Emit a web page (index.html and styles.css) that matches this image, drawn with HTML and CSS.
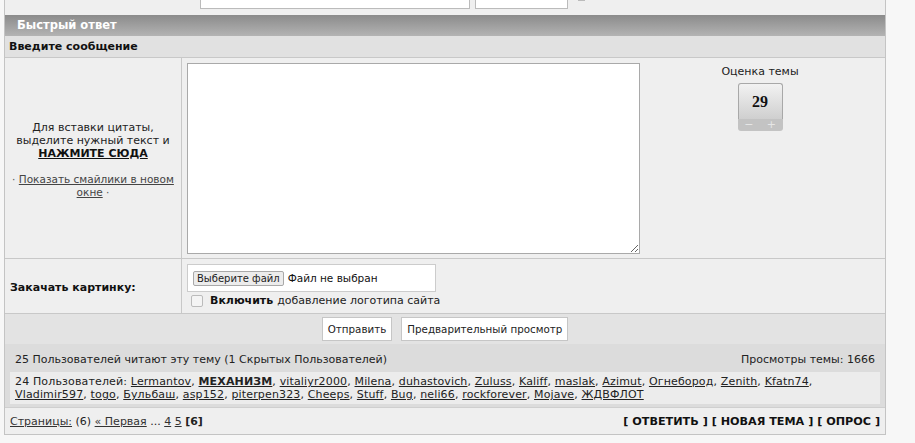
FILE: index.html
```html
<!DOCTYPE html>
<html lang="ru">
<head>
    <meta charset="UTF-8">
    <title>Быстрый ответ</title>
    <link rel="stylesheet" href="styles.css">
</head>
<body>
<div class="board">
    <div class="topbar">
        <span class="search-input"></span>
        <span class="search-where">Искать в теме</span>
        <span class="search-go"></span>
    </div>

    <div class="maintitle">Быстрый ответ</div>
    <div class="subtitle">Введите сообщение</div>

    <div class="form-row post-row">
        <div class="side">
            <p>Для вставки цитаты,<br>выделите нужный текст и<br><a href="#" class="strong">НАЖМИТЕ СЮДА</a></p>
            <p class="smiles">&middot; <a href="#">Показать смайлики в новом окне</a> &middot;</p>
        </div>
        <div class="body post-body">
            <textarea class="message"></textarea>
            <div class="rating">
                <div class="rating-title">Оценка темы</div>
                <div class="rating-box">
                    <div class="rating-num">29</div>
                    <div class="rating-ctrl"><span>&minus;</span><span>+</span></div>
                </div>
            </div>
        </div>
    </div>

    <div class="form-row upload-row">
        <div class="side label">Закачать картинку:</div>
        <div class="body">
            <div class="filebox"><span class="filebtn">Выберите файл</span>Файл не выбран</div>
            <label class="logo-check"><span class="checkbox"></span><b>Включить</b> добавление логотипа сайта</label>
        </div>
    </div>

    <div class="buttons">
        <button>Отправить</button>
        <button>Предварительный просмотр</button>
    </div>

    <div class="stats">
        <div class="stats-head">
            <span>25 Пользователей читают эту тему (1 Скрытых Пользователей)</span>
            <span>Просмотры темы: 1666</span>
        </div>
        <div class="readers">
            24 Пользователей: <a href="#">Lermantov</a>, <a href="#"><b>МЕХАНИЗМ</b></a>, <a href="#">vitaliyr2000</a>, <a href="#">Milena</a>, <a href="#">duhastovich</a>, <a href="#">Zuluss</a>, <a href="#">Kaliff</a>, <a href="#">maslak</a>, <a href="#">Azimut</a>, <a href="#">Огнебород</a>, <a href="#">Zenith</a>, <a href="#">Kfatn74</a>,<br>
            <a href="#">Vladimir597</a>, <a href="#">togo</a>, <a href="#">Бульбаш</a>, <a href="#">asp152</a>, <a href="#">piterpen323</a>, <a href="#">Cheeps</a>, <a href="#">Stuff</a>, <a href="#">Bug</a>, <a href="#">neli66</a>, <a href="#">rockforever</a>, <a href="#">Mojave</a>, <a href="#">ЖДВФЛОТ</a>
        </div>
    </div>

    <div class="pages">
        <span><a href="#">Страницы:</a> (6) <a href="#">&laquo; Первая</a> ... <a href="#">4</a> <a href="#">5</a> <b>[6]</b></span>
        <span class="actions">[ ОТВЕТИТЬ ] [ НОВАЯ ТЕМА ] [ ОПРОС ]</span>
    </div>
</div>
</body>
</html>
```

FILE: styles.css
```css
body {
    margin: 0;
    background: #f7f7f7;
    font-family: "DejaVu Sans", Verdana, sans-serif;
    font-size: 11px;
    color: #222;
}
a {
    color: #222;
}
.board {
    width: 880px;
    margin-left: 4px;
    border: 1px solid #c4c4c4;
    border-top: none;
    background: #efefef;
}

/* search strip, only its lower edge shows */
.topbar {
    height: 15px;
    display: flex;
    align-items: flex-end;
    padding-bottom: 6px;
    box-sizing: border-box;
    overflow: hidden;
    background: #efefef;
}
.search-input {
    display: block;
    width: 268px;
    height: 20px;
    margin-left: 195px;
    background: #fff;
    border: 1px solid #bbb;
    border-top: none;
}
.search-where {
    display: block;
    width: 93px;
    height: 20px;
    margin-left: 5px;
    padding-left: 5px;
    box-sizing: border-box;
    background: #fff;
    border: 1px solid #bbb;
    line-height: 12px;
    color: #333;
}
.search-go {
    display: block;
    width: 7px;
    height: 1px;
    margin: 0 0 8px 10px;
    background: #bbb;
    align-self: flex-start;
}

.maintitle {
    height: 21px;
    line-height: 21px;
    padding-left: 12px;
    background: linear-gradient(#8b8b8b, #b3b3b3);
    color: #fff;
    font-weight: bold;
    font-size: 11.5px;
}
.subtitle {
    height: 21px;
    line-height: 21px;
    padding-left: 4px;
    background: #e1e1e1;
    border-bottom: 1px solid #c8c8c8;
    font-weight: bold;
    color: #111;
}

.form-row {
    display: grid;
    grid-template-columns: 177px 1fr;
    border-bottom: 1px solid #c8c8c8;
}
.side {
    border-right: 1px solid #c8c8c8;
    text-align: center;
    padding: 0 4px;
}
.post-row .side {
    display: flex;
    flex-direction: column;
    justify-content: center;
    padding-top: 4px;
}
.side p {
    margin: 0;
    line-height: 13px;
}
.side .strong {
    font-weight: bold;
    color: #111;
}
.side .smiles {
    margin-top: 13px;
    font-size: 10.5px;
    color: #555;
}
.smiles a {
    color: #444;
}
.post-body {
    display: flex;
    padding: 5px;
    height: 190px;
}
.message {
    width: 453px;
    height: 191px;
    margin: 0;
    box-sizing: border-box;
    border: 1px solid #a9a9a9;
    background: #fff;
    resize: both;
}
.rating {
    flex: 1;
    text-align: center;
    padding-top: 2px;
    padding-right: 0;
}
.rating-title {
    line-height: 13px;
    color: #222;
}
.rating-box {
    width: 45px;
    margin: 5px auto 0;
}
.rating-num {
    height: 35px;
    line-height: 35px;
    border: 1px solid #a8a8a8;
    border-bottom: none;
    border-radius: 3px 3px 0 0;
    background: linear-gradient(#f2f2f2, #cfcfcf);
    font-family: "Liberation Serif", serif;
    font-weight: bold;
    font-size: 16px;
    color: #111;
}
.rating-ctrl {
    height: 12px;
    line-height: 11px;
    display: flex;
    justify-content: space-around;
    background: #c3c3c3;
    border-radius: 0 0 3px 3px;
    color: #e6e6e6;
    font-size: 11px;
}

.upload-row {
    min-height: 54px;
}
.upload-row .label {
    display: flex;
    align-items: center;
    text-align: left;
    padding-left: 5px;
    padding-top: 2px;
    font-weight: bold;
    color: #111;
}
.upload-row .body {
    padding: 5px;
}
.filebox {
    width: 247px;
    height: 26px;
    display: flex;
    align-items: center;
    background: #fff;
    border: 1px solid #ccc;
    font-size: 10.5px;
    color: #111;
}
.filebtn {
    margin: 0 4px 0 5px;
    padding: 1px 3px;
    border: 1px solid #a9a9a9;
    border-radius: 2px;
    background: #ececec;
    font-size: 10px;
    color: #222;
}
.logo-check {
    display: flex;
    align-items: center;
    margin-top: 1px;
    line-height: 15px;
    color: #222;
}
.logo-check b {
    margin-right: 4px;
    color: #111;
}
.checkbox {
    width: 10px;
    height: 10px;
    margin: 0 7px 0 4px;
    border: 1px solid #bbb;
    border-radius: 2px;
    background: #f4f4f4;
}

.buttons {
    display: flex;
    justify-content: center;
    gap: 9px;
    padding: 3px 0 3px;
    background: #e3e3e3;
}
button {
    height: 24px;
    padding: 0 5px;
    background: #fff;
    border: 1px solid #c6c6c6;
    font-family: inherit;
    font-size: 10.3px;
    color: #222;
}

.stats {
    background: #dcdcdc;
    padding: 9px 5px 3px;
    border-bottom: 1px solid #cfcfcf;
}
.stats-head {
    display: flex;
    justify-content: space-between;
    padding: 0 5px;
    line-height: 13px;
    margin-bottom: 6px;
}
.readers {
    background: #ececec;
    padding: 3px 5px 3px;
    line-height: 13px;
    letter-spacing: 0.15px;
}
.readers a {
    color: #222;
}

.pages {
    display: flex;
    justify-content: space-between;
    align-items: center;
    height: 26px;
    padding: 0 5px;
    background: #efefef;
}
.pages a {
    color: #333;
}
.actions {
    font-weight: bold;
    font-size: 11.2px;
    color: #111;
}
```
